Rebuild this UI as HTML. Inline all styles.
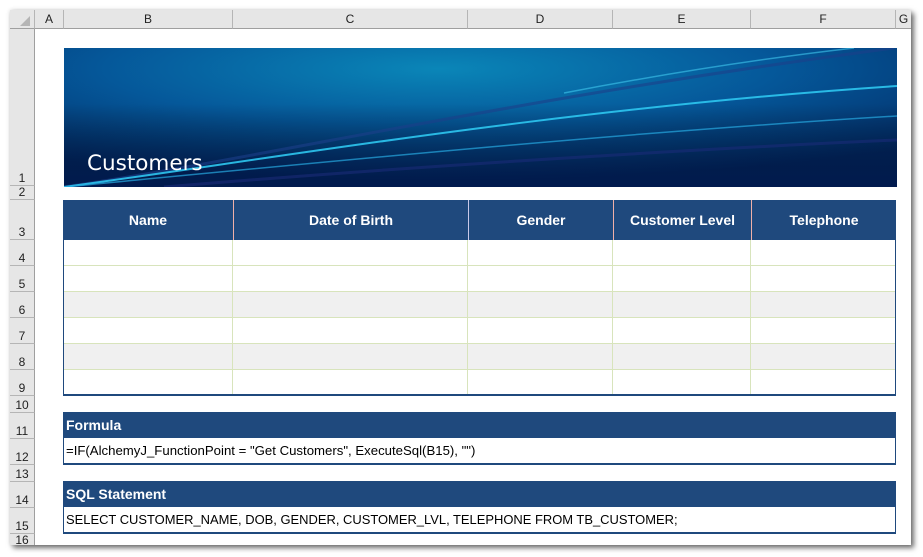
<!DOCTYPE html>
<html><head><style>
*{margin:0;padding:0;box-sizing:border-box}
body{width:923px;height:557px;background:#fff;position:relative;overflow:hidden;font-family:"Liberation Sans",Arial,sans-serif}
.a{position:absolute}
.win{left:10px;top:10px;width:901px;height:535px;background:#fff;box-shadow:3px 3px 5px rgba(0,0,0,.55),0 0 4px rgba(0,0,0,.15)}
.colh{top:10px;height:19px;background:#e6e6e6;border-bottom:1px solid #9f9f9f;font-size:12px;text-align:center;line-height:19px;color:#222;border-right:1px solid #b5b5b5}
.rowh{left:10px;width:25px;background:#e6e6e6;border-right:1px solid #9f9f9f;border-bottom:1px solid #b5b5b5;font-size:12px;text-align:center;color:#222;display:flex;align-items:flex-end;justify-content:center;line-height:14px}
.th{top:200px;height:40px;background:#1f497d;color:#fff;font-weight:bold;font-size:14px;text-align:center;line-height:40px}
.bar{background:#1f497d;color:#fff;font-weight:bold;font-size:14px;line-height:26px;padding-left:3px}
.txt{font-size:13.2px;line-height:26px;padding-left:3px;color:#000}
</style></head><body>
<div class="a win"></div>
<div class="a colh" style="left:10px;width:25px"><svg width="25" height="19" style="position:absolute;left:0;top:0"><polygon points="20,6 20,16 10,16" fill="#b5b5b5"/></svg></div>
<div class="a colh" style="left:35px;width:29px">A</div>
<div class="a colh" style="left:64px;width:169px">B</div>
<div class="a colh" style="left:233px;width:235px">C</div>
<div class="a colh" style="left:468px;width:145px">D</div>
<div class="a colh" style="left:613px;width:138px">E</div>
<div class="a colh" style="left:751px;width:145px">F</div>
<div class="a colh" style="left:896px;width:15px;border-right:none">G</div>
<div class="a rowh" style="top:29px;height:157px">1</div>
<div class="a rowh" style="top:186px;height:14px">2</div>
<div class="a rowh" style="top:200px;height:40px">3</div>
<div class="a rowh" style="top:240px;height:26px">4</div>
<div class="a rowh" style="top:266px;height:26px">5</div>
<div class="a rowh" style="top:292px;height:26px">6</div>
<div class="a rowh" style="top:318px;height:26px">7</div>
<div class="a rowh" style="top:344px;height:26px">8</div>
<div class="a rowh" style="top:370px;height:26px">9</div>
<div class="a rowh" style="top:396px;height:17px">10</div>
<div class="a rowh" style="top:413px;height:26px">11</div>
<div class="a rowh" style="top:439px;height:26px">12</div>
<div class="a rowh" style="top:465px;height:17px">13</div>
<div class="a rowh" style="top:482px;height:26px">14</div>
<div class="a rowh" style="top:508px;height:26px">15</div>
<div class="a rowh" style="top:534px;height:11px;border-bottom:none;overflow:hidden;align-items:flex-start;line-height:12px">16</div>
<svg class="a" style="left:64px;top:48px" width="833" height="139" viewBox="0 0 833 139">
<defs>
<radialGradient id="g" cx="0.45" cy="0.15" r="0.8">
<stop offset="0" stop-color="#0a86b8"/><stop offset="0.5" stop-color="#05589a"/><stop offset="1" stop-color="#022a64"/></radialGradient>
<linearGradient id="d" x1="0" y1="0" x2="0" y2="1"><stop offset="0.4" stop-color="#000" stop-opacity="0"/><stop offset="1" stop-color="#001040" stop-opacity="0.6"/></linearGradient>
</defs>
<rect width="833" height="139" fill="url(#g)"/>
<rect width="833" height="139" fill="url(#d)"/>
<path d="M0,139 C200,110 450,50 830,0" stroke="#1d3f8a" stroke-width="3" fill="none" opacity="0.6"/>
<path d="M0,139 C200,112 500,60 833,38" stroke="#2ec6f0" stroke-width="2" fill="none" opacity="0.9"/>
<path d="M0,139 C250,115 550,85 833,68" stroke="#27a8e0" stroke-width="1.5" fill="none" opacity="0.7"/>
<path d="M100,139 C350,118 650,100 833,92" stroke="#1a2c78" stroke-width="3" fill="none" opacity="0.6"/>
<path d="M500,45 C620,22 720,8 790,0" stroke="#3fc8ee" stroke-width="1.5" fill="none" opacity="0.6"/>
<text x="23" y="122" fill="#fff" font-family="DejaVu Sans, sans-serif" font-size="21.5">Customers</text>
</svg>
<div class="a th" style="left:63px;width:170px">Name</div>
<div class="a th" style="left:233px;width:235px;border-left:1px solid #f0b0a8">Date of Birth</div>
<div class="a th" style="left:468px;width:145px;border-left:1px solid #c8c8e8">Gender</div>
<div class="a th" style="left:613px;width:138px;border-left:1px solid #f0b0a8">Customer Level</div>
<div class="a th" style="left:751px;width:145px;border-left:1px solid #f0b0a8">Telephone</div>
<div class="a" style="left:63px;top:240px;width:833px;height:156px;border-left:1px solid #1f497d;border-right:1px solid #1f497d;border-bottom:2px solid #1f497d;background:
linear-gradient(#fff 0 52px,#f0f0f0 52px 78px,#fff 78px 104px,#f0f0f0 104px 130px,#fff 130px)"></div>
<div class="a" style="left:64px;top:265px;width:831px;height:1px;background:#d8e4bc"></div>
<div class="a" style="left:64px;top:291px;width:831px;height:1px;background:#d8e4bc"></div>
<div class="a" style="left:64px;top:317px;width:831px;height:1px;background:#d8e4bc"></div>
<div class="a" style="left:64px;top:343px;width:831px;height:1px;background:#d8e4bc"></div>
<div class="a" style="left:64px;top:369px;width:831px;height:1px;background:#d8e4bc"></div>
<div class="a" style="left:232px;top:240px;width:1px;height:154px;background:#d8e4bc"></div>
<div class="a" style="left:467px;top:240px;width:1px;height:154px;background:#d8e4bc"></div>
<div class="a" style="left:612px;top:240px;width:1px;height:154px;background:#d8e4bc"></div>
<div class="a" style="left:750px;top:240px;width:1px;height:154px;background:#d8e4bc"></div>
<div class="a bar" style="left:63px;top:412px;width:833px;height:26px">Formula</div>
<div class="a txt" style="left:63px;top:438px;width:833px;height:27px;border-left:1px solid #1f497d;border-right:1px solid #1f497d;border-bottom:2px solid #1f497d;line-height:25px;padding-left:2px">=IF(AlchemyJ_FunctionPoint = "Get Customers", ExecuteSql(B15), "")</div>
<div class="a bar" style="left:63px;top:481px;width:833px;height:26px">SQL Statement</div>
<div class="a txt" style="left:63px;top:507px;width:833px;height:27px;border-left:1px solid #1f497d;border-right:1px solid #1f497d;border-bottom:2px solid #1f497d;line-height:25px;padding-left:2px;font-size:12.95px">SELECT CUSTOMER_NAME, DOB, GENDER, CUSTOMER_LVL, TELEPHONE FROM TB_CUSTOMER;</div>
</body></html>
